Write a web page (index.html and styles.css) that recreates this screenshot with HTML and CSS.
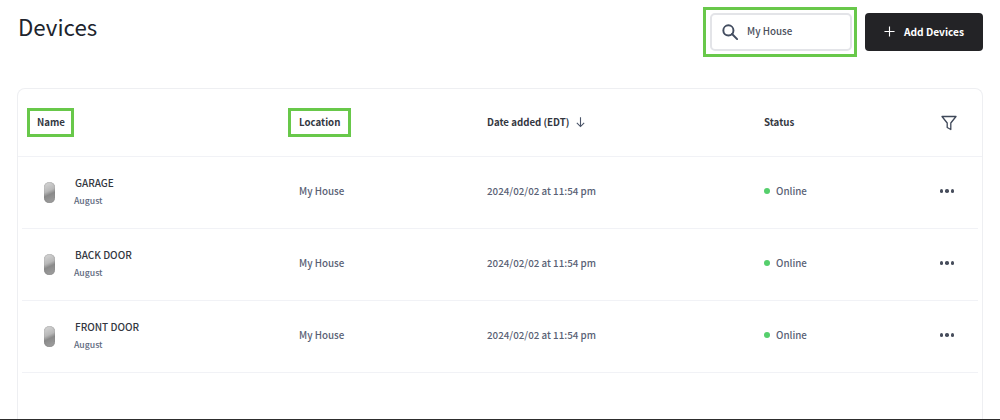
FILE: index.html
```
<!DOCTYPE html>
<html lang="en">
<head>
<meta charset="utf-8">
<title>Devices</title>
<link rel="stylesheet" href="styles.css">
</head>
<body>
<div class="page">
  <header class="top">
    <h1 class="title">Devices</h1>
    <div class="actions">
      <div class="mark mark-search">
        <div class="search">
          <svg class="search-icon" width="16" height="16" viewBox="0 0 18 18" fill="none" stroke="#434d60" stroke-width="2.2"><circle cx="7.2" cy="7.2" r="5.7"/><path d="M11.3 11.3l5.7 5.7" stroke-linecap="round"/></svg>
          <span>My House</span>
        </div>
      </div>
      <button class="add">
        <svg width="11" height="11" viewBox="0 0 12 12" stroke="#fff" stroke-width="1.2" fill="none"><path d="M6 .5v11M.5 6h11"/></svg>
        <span>Add Devices</span>
      </button>
    </div>
  </header>
  <section class="card">
    <div class="row head">
      <div><span class="mark mark-name">Name</span></div>
      <div><span class="mark mark-loc">Location</span></div>
      <div class="date-head lifted">Date added (EDT)
        <svg width="11" height="12" viewBox="0 0 12 12" fill="none" stroke="#4a5468" stroke-width="1.2"><path d="M6 .8v10M2 7l4 4 4-4"/></svg>
      </div>
      <div class="lifted">Status</div>
      <div class="cell-end">
        <svg class="filter" width="16" height="16" viewBox="0 0 16 16" fill="none" stroke="#3f4859" stroke-width="1.3" stroke-linejoin="round"><path d="M1 1.5h14L9.8 8v6.5L6.2 12.5V8z"/></svg>
      </div>
    </div>
    <div class="row item">
      <div class="device">
        <div class="lock"></div>
        <div><div class="dev-name">GARAGE</div><div class="dev-brand">August</div></div>
      </div>
      <div>My House</div>
      <div>2024/02/02 at 11:54 pm</div>
      <div class="status"><i class="dot"></i>Online</div>
      <div class="cell-end"><div class="more"><i></i><i></i><i></i></div></div>
    </div>
    <div class="row item">
      <div class="device">
        <div class="lock"></div>
        <div><div class="dev-name">BACK DOOR</div><div class="dev-brand">August</div></div>
      </div>
      <div>My House</div>
      <div>2024/02/02 at 11:54 pm</div>
      <div class="status"><i class="dot"></i>Online</div>
      <div class="cell-end"><div class="more"><i></i><i></i><i></i></div></div>
    </div>
    <div class="row item last">
      <div class="device">
        <div class="lock"></div>
        <div><div class="dev-name">FRONT DOOR</div><div class="dev-brand">August</div></div>
      </div>
      <div>My House</div>
      <div>2024/02/02 at 11:54 pm</div>
      <div class="status"><i class="dot"></i>Online</div>
      <div class="cell-end"><div class="more"><i></i><i></i><i></i></div></div>
    </div>
  </section>
</div>
</body>
</html>
```
FILE: styles.css
```
* { box-sizing: border-box; }
html, body { margin: 0; height: 100%; }
body {
  width: 1000px;
  height: 420px;
  overflow: hidden;
  background: #fff;
  font-family: "Noto Sans CJK JP", "Noto Sans", sans-serif;
  color: #2b2f38;
  border-bottom: 1px solid #2d2d2d;
}
.page { padding: 7px 17px 0 17px; height: 100%; display: flex; flex-direction: column; }
.top { display: flex; justify-content: space-between; height: 81px; flex: none; }
.title { margin: 3px 0 0 1px; font-size: 22.3px; font-weight: 400; line-height: 32px; color: #20242d; }
.actions { display: flex; gap: 8px; align-items: flex-start; }
.mark { border: 3px solid #68c84a; display: inline-flex; align-items: center; }
.mark-search { width: 154px; height: 50px; padding: 3px 2px 3px 4px; }
.search {
  flex: 1; height: 38px; border: 2px solid #e3e4e8; border-radius: 5px;
  display: flex; align-items: center; font-size: 9.8px; color: #4a4f5c; font-weight: 500;
  padding: 0 0 2px 10px; gap: 9px;
}
.search-icon { flex: none; margin-top: 1px; }
.add {
  margin-top: 6px; width: 118px; height: 38px; border: 0; border-radius: 4px;
  background: #232326; color: #fff; font: inherit; font-size: 10.2px; font-weight: 700;
  display: flex; align-items: center; justify-content: center; gap: 9px; padding: 0 0 2px;
}
.card {
  flex: 1; border: 1px solid #eeeff2; border-bottom: 0;
  border-radius: 8px 8px 0 0; padding: 0 4px;
}
.row {
  display: grid; grid-template-columns: 263px 188px 277px 1fr 62px;
  align-items: center; padding-left: 14px; font-size: 9.8px; color: #596175; font-weight: 500;
  border-bottom: 1px solid #f1f2f6;
}
.head { height: 68px; color: #33373f; font-weight: 700; font-size: 9.7px; margin: 0 -4px; padding-left: 18px; padding-right: 4px; }
.item { height: 72px; padding-bottom: 3px; }
.date-head { display: flex; align-items: center; gap: 6px; }
.lifted { margin-bottom: 2px; }
.mark-name, .mark-loc { height: 29px; padding: 0 6px 1px 7px; margin-left: -9px; }
.mark-loc { padding: 0 8px 1px; margin-left: -11px; }
.cell-end { display: flex; justify-content: center; }
.filter { margin-left: 4px; }
.device { display: flex; align-items: center; gap: 19px; padding-left: 8px; }
.lock {
  width: 11px; height: 21px; border-radius: 6px; margin-top: 2px;
  background: linear-gradient(155deg, #dadada 0%, #b8b8b8 42%, #8a8a8a 58%, #a2a2a2 100%);
  box-shadow: inset 0 0 1px #666;
  flex: none;
}
.dev-name { font-size: 10px; color: #33373f; line-height: 16px; font-weight: 500; margin: 1px 0 0 1px; }
.dev-brand { font-size: 8.7px; color: #606a80; line-height: 16px; margin: 2px 0 0 0; }
.status { display: flex; align-items: center; gap: 6px; }
.dot { width: 6px; height: 6px; border-radius: 50%; background: #55cf6c; }
.more { display: flex; gap: 2px; }
.more i { width: 3.5px; height: 3.5px; border-radius: 50%; background: #474d5c; }
```
